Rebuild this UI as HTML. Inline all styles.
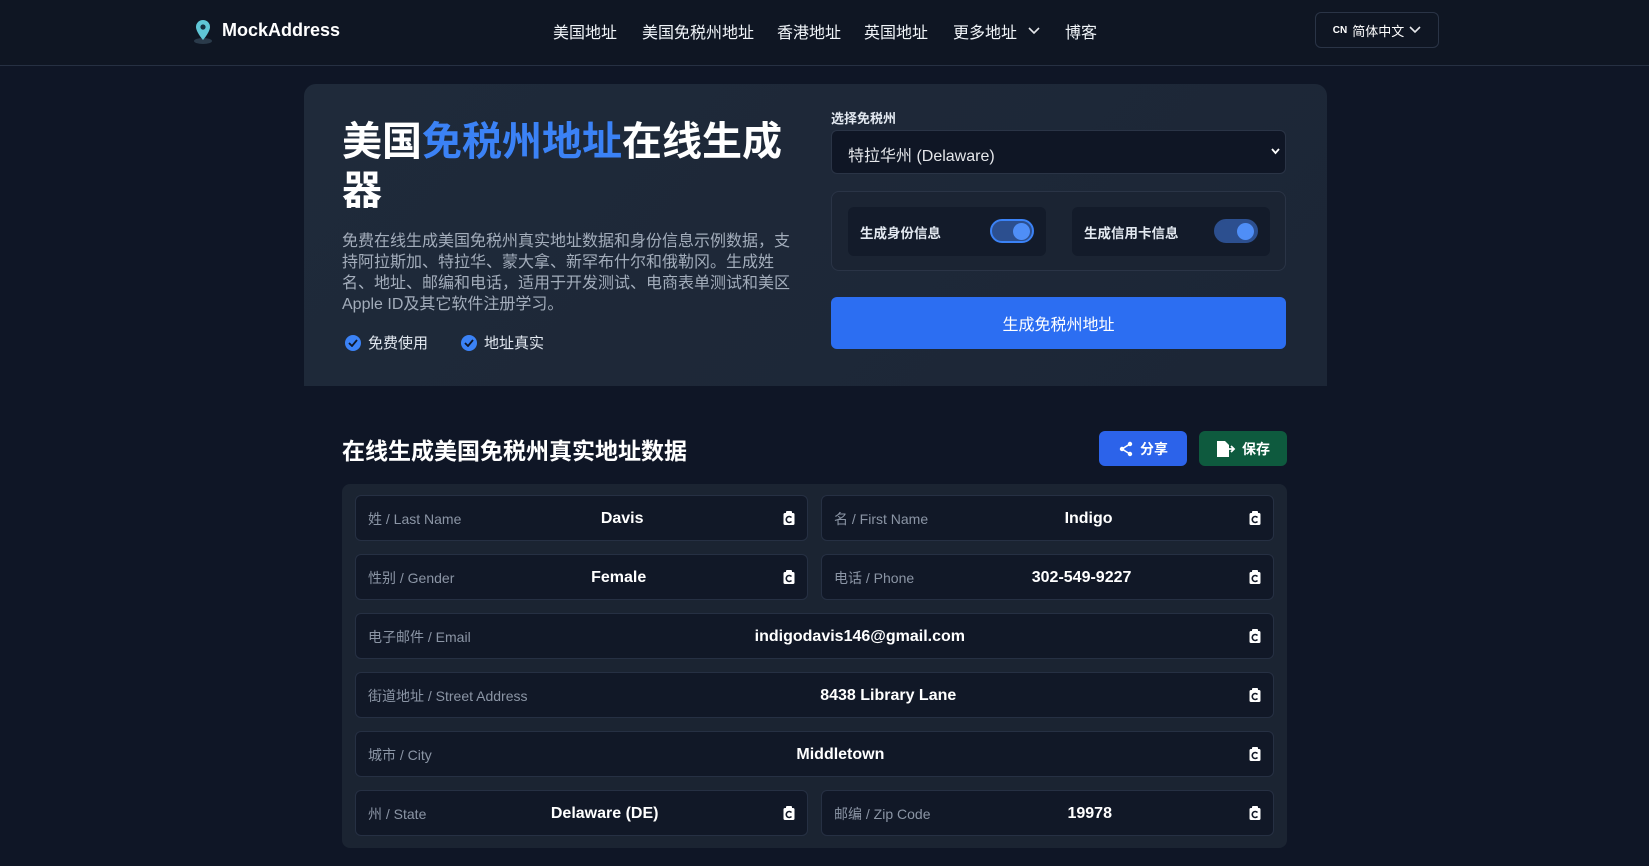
<!DOCTYPE html>
<html><head><meta charset="utf-8">
<style>
*{box-sizing:border-box;margin:0;padding:0}
body{width:1649px;height:866px;overflow:hidden;background:#0f1626;font-family:"Liberation Sans","Noto Sans CJK SC",sans-serif;color:#fff;position:relative}
.abs{position:absolute}
.hdr{left:0;top:0;width:1649px;height:66px;border-bottom:1px solid #263042;background:#0f1623}
.logo{left:222px;top:20px;font-size:18px;font-weight:bold}
.nav{top:19px;font-size:16px;color:#f1f5f9}
.lang{left:1315px;top:12px;width:124px;height:36px;border:1px solid #2a3446;border-radius:6px;font-size:13px;display:flex;align-items:center;justify-content:center;gap:5px}
.hero{left:304px;top:84px;width:1023px;height:302px;background:linear-gradient(135deg,#1f2a3a,#1c2636);border-radius:12px 12px 0 0}
.t1{left:342px;top:118px;font-size:40px;font-weight:bold;line-height:49px;width:460px}
.desc{left:342px;top:231px;width:452px;font-size:16px;line-height:21px;color:#a3adbb}
.chk{top:332px;font-size:15px;color:#e2e8f0;display:flex;align-items:center;gap:7px}
.dot{width:16px;height:16px;border-radius:50%;background:#3b82f6;display:inline-flex;align-items:center;justify-content:center}
.lbl{left:831px;top:108px;font-size:13px;font-weight:bold;color:#e2e8f0}
.sel{left:831px;top:130px;width:455px;height:44px;background:#0f1625;border:1px solid #2a3446;border-radius:6px;font-size:16px;padding:11px 16px;color:#e5e7eb}
.tgbox{left:831px;top:191px;width:455px;height:80px;border:1px solid #2a3446;border-radius:8px;background:#1b2433}
.tg{top:207px;width:198px;height:49px;background:#131b2a;border-radius:6px;font-size:13.5px;font-weight:bold;color:#e2e8f0;padding:15px 12px}
.sw{position:absolute;top:12px;right:12px;width:44px;height:24px;border-radius:12px;background:#2c4f8f;border:2px solid #3b82f6}
.sw i{position:absolute;right:2px;top:2px;width:17px;height:17px;border-radius:50%;background:#4f8ef7}
.btn{left:831px;top:297px;width:455px;height:52px;background:#2c6ef2;border-radius:6px;font-size:16px;display:flex;align-items:center;justify-content:center}
.st{left:342px;top:432px;font-size:23px;font-weight:bold}
.share{left:1099px;top:431px;width:88px;height:35px;background:#2c63ea;border-radius:6px;font-size:14px;font-weight:bold;display:flex;align-items:center;justify-content:center;gap:6px}
.save{left:1199px;top:431px;width:88px;height:35px;background:#0e5a3e;border-radius:6px;font-size:14px;font-weight:bold;display:flex;align-items:center;justify-content:center;gap:6px}
.card{left:342px;top:484px;width:945px;height:364px;background:#1b2432;border-radius:8px}
.f{height:46px;background:#111827;border:1px solid #263043;border-radius:6px;display:flex;align-items:center;padding:0 12px;font-size:14px}
.f .l{color:#8b95a5;padding-top:2px}
.f .v{flex:1;text-align:center;font-weight:bold;font-size:16px;padding-top:2px}
.cp{width:12px;height:14px;position:relative}
</style></head><body>
<div class="abs hdr"></div>
<svg class="abs" style="left:192px;top:19px" width="22" height="26" viewBox="0 0 22 26"><ellipse cx="11" cy="22" rx="9" ry="3" fill="#2a3a4a"/><path d="M11 1a7 7 0 0 0-7 7c0 5 7 13 7 13s7-8 7-13a7 7 0 0 0-7-7z" fill="#5fc6d6"/><circle cx="11" cy="8" r="2.6" fill="#153040"/></svg>
<div class="abs logo">MockAddress</div>
<div class="abs nav" style="left:553px">美国地址</div>
<div class="abs nav" style="left:642px">美国免税州地址</div>
<div class="abs nav" style="left:777px">香港地址</div>
<div class="abs nav" style="left:864px">英国地址</div>
<div class="abs nav" style="left:953px">更多地址</div>
<svg class="abs" style="left:1028px;top:27px" width="12" height="8" viewBox="0 0 12 8"><path d="M1 1l5 5 5-5" stroke="#e5e7eb" stroke-width="1.6" fill="none"/></svg>
<div class="abs nav" style="left:1065px">博客</div>
<div class="abs lang"><span style="font-size:10px;font-weight:bold">CN</span> 简体中文 <svg width="12" height="8" viewBox="0 0 12 8"><path d="M1 1l5 5 5-5" stroke="#e5e7eb" stroke-width="1.6" fill="none"/></svg></div>

<div class="abs hero"></div>
<div class="abs t1">美国<span style="color:#3b82f6">免税州地址</span>在线生成器</div>
<div class="abs desc">免费在线生成美国免税州真实地址数据和身份信息示例数据，支持阿拉斯加、特拉华、蒙大拿、新罕布什尔和俄勒冈。生成姓名、地址、邮编和电话，适用于开发测试、电商表单测试和美区Apple ID及其它软件注册学习。</div>
<div class="abs chk" style="left:345px"><span class="dot"><svg width="10" height="8" viewBox="0 0 10 8"><path d="M1 4l3 3 5-6" stroke="#0f1626" stroke-width="1.8" fill="none"/></svg></span>免费使用</div>
<div class="abs chk" style="left:461px"><span class="dot"><svg width="10" height="8" viewBox="0 0 10 8"><path d="M1 4l3 3 5-6" stroke="#0f1626" stroke-width="1.8" fill="none"/></svg></span>地址真实</div>

<div class="abs lbl">选择免税州</div>
<div class="abs sel">特拉华州 (Delaware)</div>
<svg class="abs" style="left:1271px;top:148px" width="9" height="7" viewBox="0 0 9 7"><path d="M1 1l3.5 4 3.5-4" stroke="#fff" stroke-width="1.8" fill="none"/></svg>
<div class="abs tgbox"></div>
<div class="abs tg" style="left:848px">生成身份信息<span class="sw"><i></i></span></div>
<div class="abs tg" style="left:1072px">生成信用卡信息<span class="sw" style="border-color:#2c4f8f"><i></i></span></div>
<div class="abs btn">生成免税州地址</div>

<div class="abs st">在线生成美国免税州真实地址数据</div>
<div class="abs share"><svg width="16" height="16" viewBox="0 0 16 16"><circle cx="12" cy="3" r="2.2" fill="#fff"/><circle cx="4" cy="8" r="2.2" fill="#fff"/><circle cx="12" cy="13" r="2.2" fill="#fff"/><path d="M12 3L4 8l8 5" stroke="#fff" stroke-width="1.6" fill="none"/></svg>分享</div>
<div class="abs save"><svg width="20" height="18" viewBox="0 0 20 18"><path d="M1 1h8l4 4v12H1z" fill="#fff"/><path d="M11 9h7M15 6l3 3-3 3" stroke="#fff" stroke-width="1.8" fill="none"/></svg>保存</div>

<div class="abs card"></div>
<div id="rows"></div>
<script>
var C='<svg class="cp" viewBox="0 0 12 14"><rect x="0.5" y="2" width="11" height="12" rx="1.5" fill="#fff"/><rect x="3" y="0" width="6" height="3" rx="1" fill="#fff"/><path d="M8.5 6.5a3 3 0 1 0 0 4" stroke="#111827" stroke-width="1.6" fill="none"/></svg>';
var rows=[[495,355,453,'姓 / Last Name','Davis'],[495,821,453,'名 / First Name','Indigo'],[554,355,453,'性别 / Gender','Female'],[554,821,453,'电话 / Phone','302-549-9227'],[613,355,919,'电子邮件 / Email','indigodavis146@gmail.com'],[672,355,919,'街道地址 / Street Address','8438 Library Lane'],[731,355,919,'城市 / City','Middletown'],[790,355,453,'州 / State','Delaware (DE)'],[790,821,453,'邮编 / Zip Code','19978']];
var h='';rows.forEach(function(r){h+='<div class="abs f" style="top:'+r[0]+'px;left:'+r[1]+'px;width:'+r[2]+'px"><span class="l">'+r[3]+'</span><span class="v">'+r[4]+'</span>'+C+'</div>';});
document.getElementById('rows').innerHTML=h;
</script>
</body></html>
